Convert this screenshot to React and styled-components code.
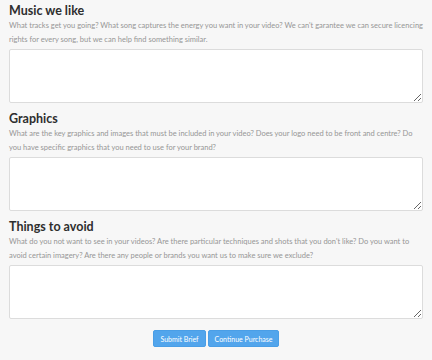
import styled, { createGlobalStyle } from "styled-components";

const Global = createGlobalStyle`
  html, body {
    margin: 0;
    padding: 0;
    background: #f7f7f7;
    font-family: Lato, "Open Sans", sans-serif;
  }
`;

const Page = styled.div`
  display: flex;
  flex-direction: column;
  padding: 3px 9px 0 9px;
`;

const Section = styled.div`
  display: flex;
  flex-direction: column;
  margin-bottom: 8px;
`;

const Title = styled.h2`
  margin: 0;
  font-size: 12.5px;
  line-height: 15px;
  font-weight: 700;
  color: #2e2e2e;
`;

const Desc = styled.p`
  margin: 1px 0 3px 0;
  font-size: 7.5px;
  line-height: 13.5px;
  color: #969696;
`;

const Area = styled.textarea`
  box-sizing: border-box;
  width: 100%;
  height: 54px;
  margin: 0;
  border: 1px solid #dcdcdc;
  border-radius: 2px;
  background: #fff;
  resize: vertical;
  font-family: inherit;
`;

const Actions = styled.div`
  display: flex;
  justify-content: center;
  gap: 2px;
  margin-top: 3px;
`;

const Button = styled.button`
  height: 17px;
  padding: 0 ${(p) => p.$pad}px;
  border: 1px solid #4a9ee6;
  border-radius: 2px;
  background: #52a5ec;
  color: #fff;
  font-family: Lato, sans-serif;
  font-size: 7px;
  cursor: pointer;
`;

const sections = [
  {
    title: "Music we like",
    text: "What tracks get you going? What song captures the energy you want in your video? We can't garantee we can secure licencing rights for every song, but we can help find something similar.",
  },
  {
    title: "Graphics",
    text: "What are the key graphics and images that must be included in your video? Does your logo need to be front and centre? Do you have specific graphics that you need to use for your brand?",
  },
  {
    title: "Things to avoid",
    text: "What do you not want to see in your videos? Are there particular techniques and shots that you don't like? Do you want to avoid certain imagery? Are there any people or brands you want us to make sure we exclude?",
  },
];

export default function App() {
  return (
    <Page>
      <Global />
      {sections.map((s) => (
        <Section key={s.title}>
          <Title>{s.title}</Title>
          <Desc>{s.text}</Desc>
          <Area />
        </Section>
      ))}
      <Actions>
        <Button $pad={6.5}>Submit Brief</Button>
        <Button $pad={5.5}>Continue Purchase</Button>
      </Actions>
    </Page>
  );
}
